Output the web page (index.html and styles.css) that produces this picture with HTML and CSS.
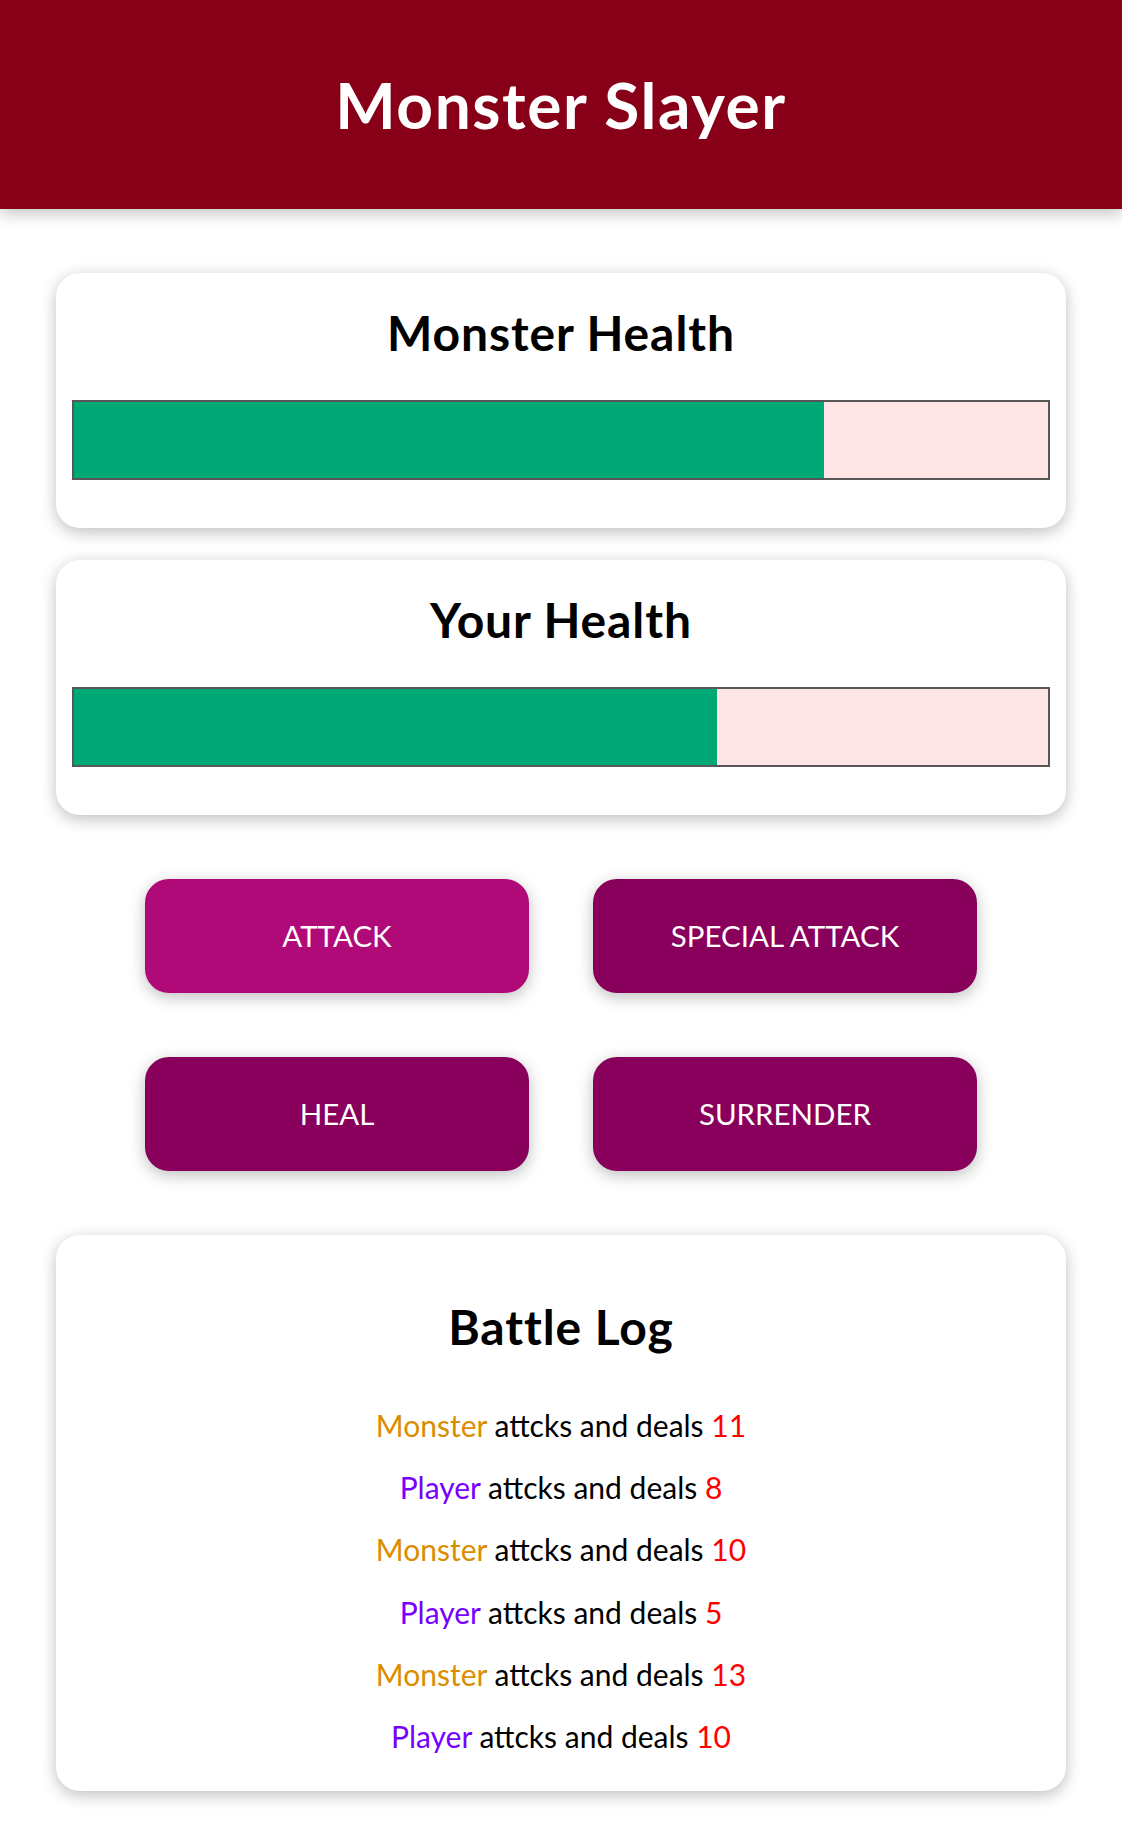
FILE: index.html
```html
<!DOCTYPE html>
<html lang="en">
<head>
<meta charset="utf-8">
<title>Monster Slayer</title>
<link rel="stylesheet" href="styles.css">
</head>
<body>
<header class="page-header">
  <h1 class="page-title">Monster Slayer</h1>
</header>
<div class="game">
  <section class="container">
    <h2 class="bar-title">Monster Health</h2>
    <div class="healthbar">
      <div class="healthbar-value" style="width: 77%"></div>
    </div>
  </section>
  <section class="container">
    <h2 class="bar-title">Your Health</h2>
    <div class="healthbar">
      <div class="healthbar-value" style="width: 66%"></div>
    </div>
  </section>
  <section class="controls">
    <button class="btn btn-active">ATTACK</button>
    <button class="btn">SPECIAL ATTACK</button>
    <button class="btn">HEAL</button>
    <button class="btn">SURRENDER</button>
  </section>
  <section class="container log">
    <h2 class="log-title">Battle Log</h2>
    <ul class="log-list">
      <li class="log-item"><span class="log-monster">Monster</span> attcks and deals <span class="log-damage">11</span></li>
      <li class="log-item"><span class="log-player">Player</span> attcks and deals <span class="log-damage">8</span></li>
      <li class="log-item"><span class="log-monster">Monster</span> attcks and deals <span class="log-damage">10</span></li>
      <li class="log-item"><span class="log-player">Player</span> attcks and deals <span class="log-damage">5</span></li>
      <li class="log-item"><span class="log-monster">Monster</span> attcks and deals <span class="log-damage">13</span></li>
      <li class="log-item"><span class="log-player">Player</span> attcks and deals <span class="log-damage">10</span></li>
    </ul>
  </section>
</div>
</body>
</html>
```
FILE: styles.css
```css
* {
  box-sizing: border-box;
}

html {
  font-family: Lato, "Open Sans", sans-serif;
}

body {
  margin: 0;
  background: #ffffff;
  color: #000000;
}

.page-header {
  padding: 16px;
  background-color: #880017;
  color: #ffffff;
  text-align: center;
  margin-bottom: 64px;
  box-shadow: 0 4px 16px rgba(0, 0, 0, 0.26);
}

.page-title {
  margin: 43px 0;
  font-size: 64px;
  font-weight: 700;
  line-height: 91px;
  letter-spacing: 1.6px;
}

.game {
  width: 90%;
  margin: 0 auto;
}

.container {
  text-align: center;
  padding: 16px;
  box-shadow: 0 4px 16px rgba(0, 0, 0, 0.26);
  margin: 32px auto;
  border-radius: 24px;
  background: #ffffff;
}

.bar-title {
  margin: 8px;
  font-size: 48px;
  font-weight: 700;
  line-height: 71px;
  letter-spacing: 0.9px;
}

.healthbar {
  width: 100%;
  height: 80px;
  border: 2px solid #575757;
  margin: 32px 0;
  background: #fde5e5;
}

.healthbar-value {
  background-color: #00a876;
  height: 100%;
}

.controls {
  display: flex;
  flex-wrap: wrap;
  justify-content: center;
  align-items: center;
  margin: 32px auto;
}

.btn {
  font: inherit;
  font-size: 29.5px;
  line-height: 46px;
  border: 2px solid #88005b;
  background-color: #88005b;
  color: #ffffff;
  padding: 32px 64px;
  border-radius: 24px;
  margin: 32px;
  width: 384px;
  box-shadow: 0 4px 16px rgba(0, 0, 0, 0.26);
}

.btn-active {
  background-color: #af0a78;
  border-color: #af0a78;
}

.log-title {
  margin: 40px 0;
  font-size: 48px;
  font-weight: 700;
  line-height: 71px;
  letter-spacing: 0.9px;
}

.log-list {
  list-style: none;
  margin: 0;
  padding: 0;
}

.log-item {
  margin: 16px 0;
  font-size: 30px;
  line-height: 46.2px;
}

.log-monster {
  color: #da8d00;
}

.log-player {
  color: #7700ff;
}

.log-damage {
  color: #ff0000;
}
```
